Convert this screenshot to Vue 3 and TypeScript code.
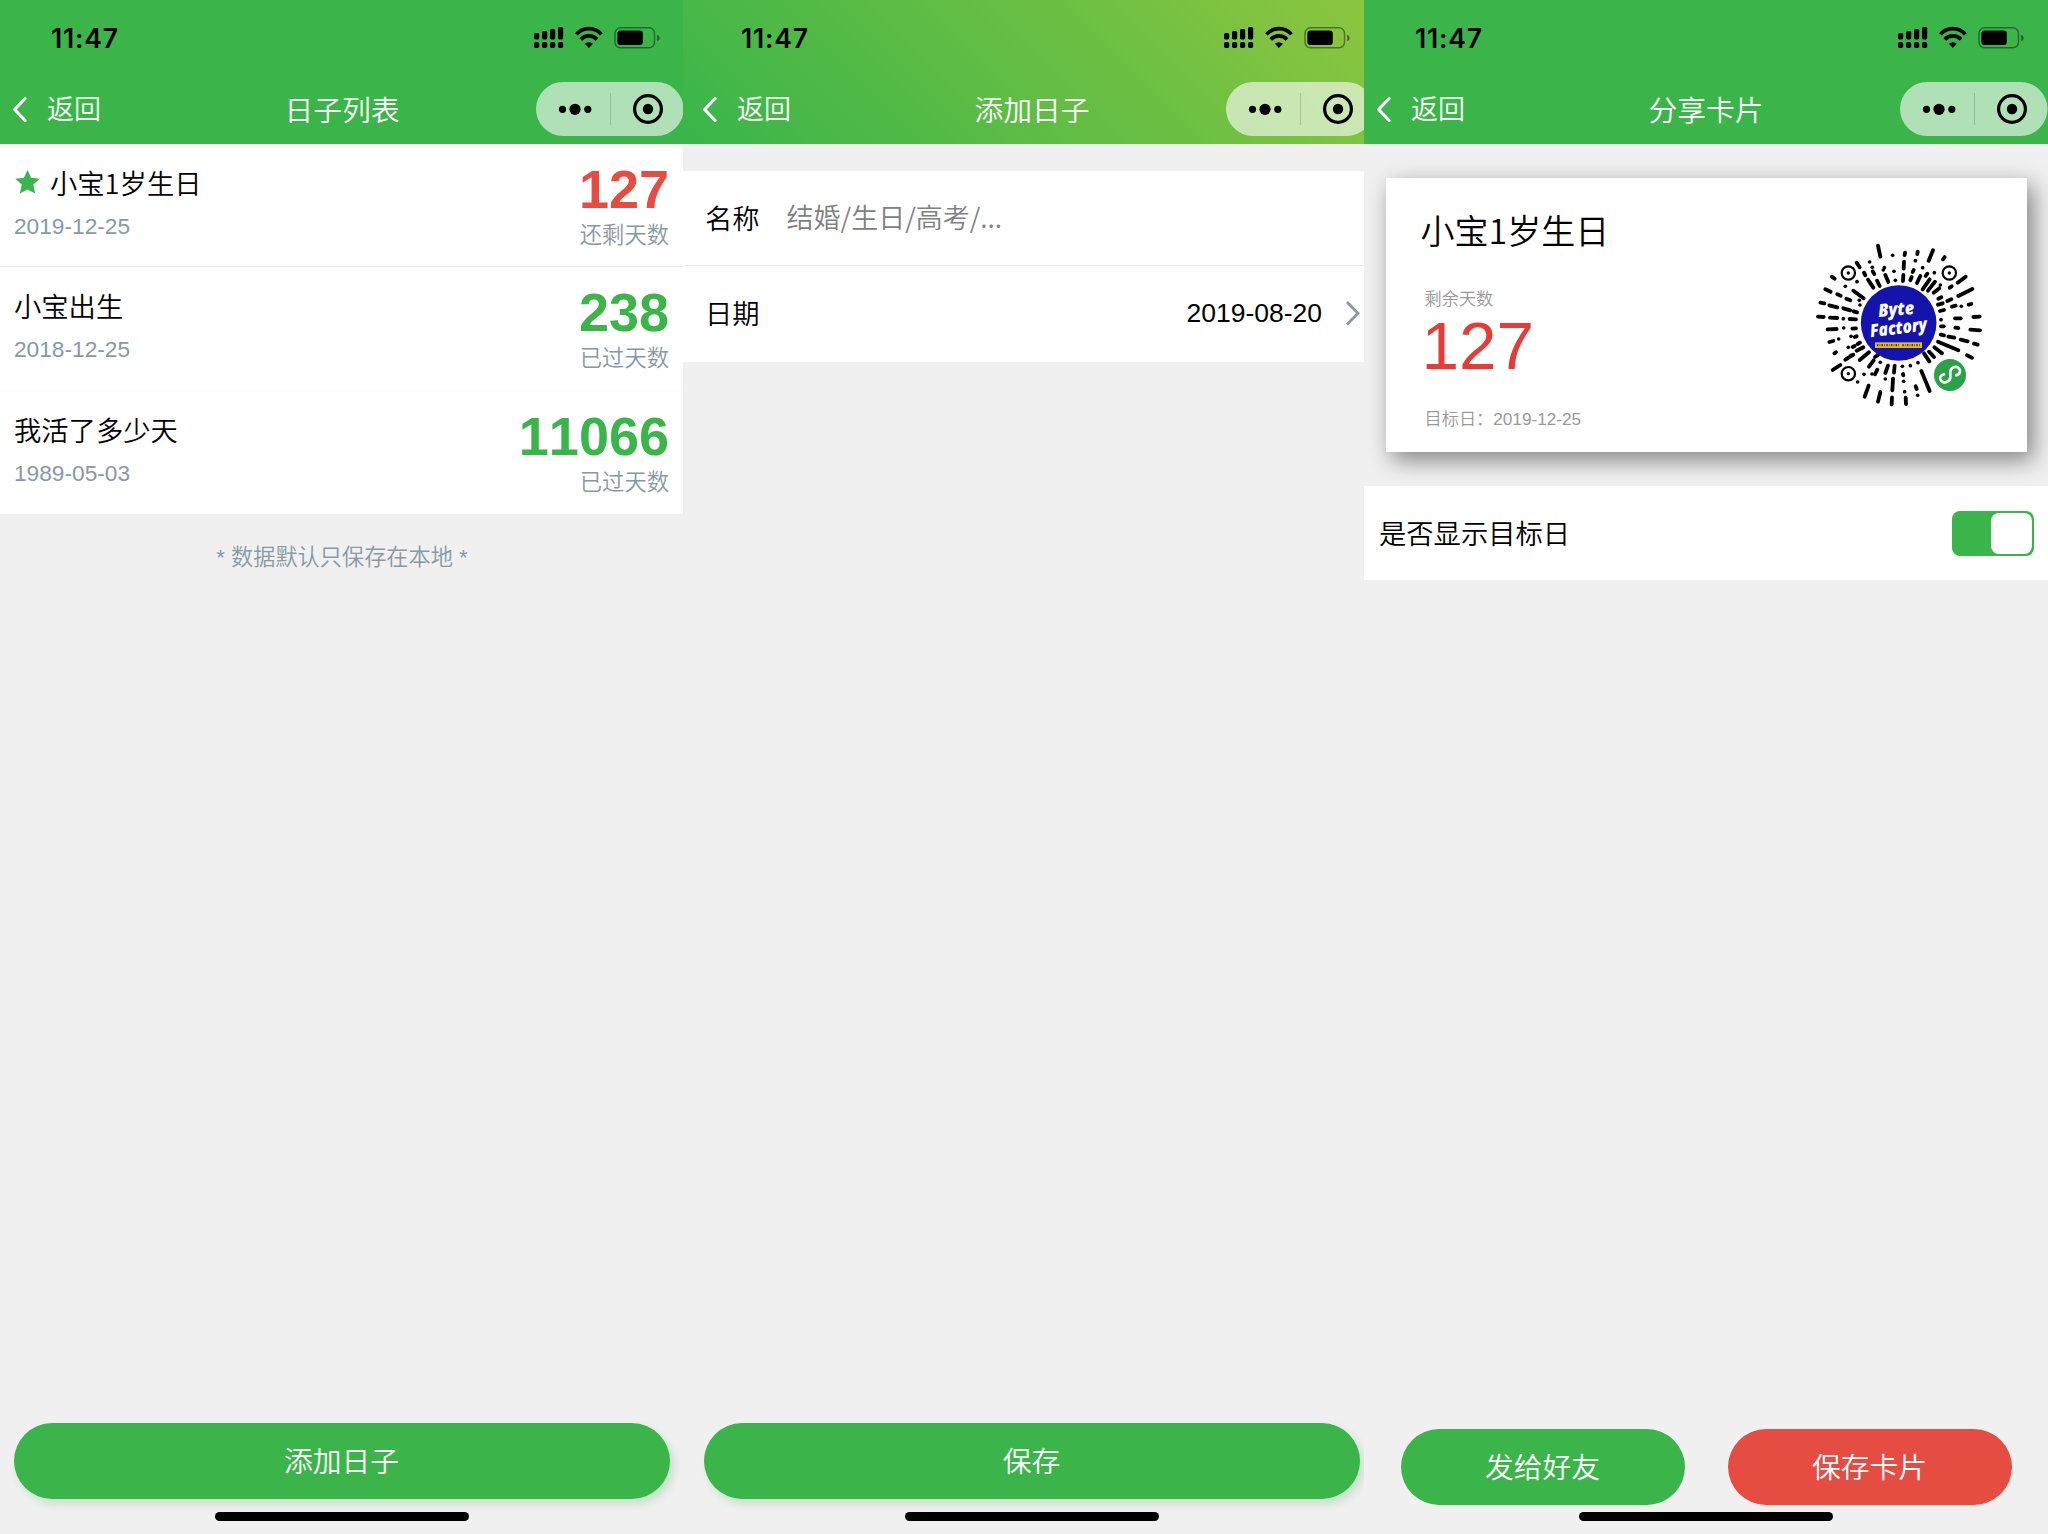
<script setup lang="ts">
import { h, type FunctionalComponent } from 'vue'

interface Day {
  name: string
  date: string
  count: number
  label: string
  starred?: boolean
  upcoming?: boolean
}

const days: Day[] = [
  { name: '小宝1岁生日', date: '2019-12-25', count: 127, label: '还剩天数', starred: true, upcoming: true },
  { name: '小宝出生', date: '2018-12-25', count: 238, label: '已过天数' },
  { name: '我活了多少天', date: '1989-05-03', count: 11066, label: '已过天数' },
]

// Signal, wifi and battery glyphs of the status bar
const StatusIcons: FunctionalComponent = () =>
  h('svg', { width: 128, height: 24, viewBox: '0 0 128 24', style: 'display:block' }, [
    ...[[0, 7], [8, 5], [16, 3], [24, 1]].flatMap(([x, y]) => [
      h('rect', { x, y, width: 5.2, height: 13.4 - y, rx: 1.6 }),
      h('rect', { x, y: 16, width: 5.2, height: 6, rx: 1.8 }),
    ]),
    h('path', { d: 'M42.4 8.4A16.6 16.6 0 0 1 67.4 8.4M46.8 13.4A11 11 0 0 1 63 13.4', fill: 'none', stroke: '#000', 'stroke-width': 3.7 }),
    h('path', { d: 'M54.9 22l-4-4.2a5.8 5.8 0 0 1 8 0z' }),
    h('rect', { x: 81, y: 1.8, width: 39.5, height: 20, rx: 5.5, fill: 'none', stroke: '#000', 'stroke-opacity': 0.42, 'stroke-width': 1.4 }),
    h('rect', { x: 83.4, y: 4.6, width: 25.4, height: 14.4, rx: 3 }),
    h('path', { d: 'M123.2 8.8q2.4 1 2.4 3.2t-2.4 3.2z', 'fill-opacity': 0.5 }),
  ])

const Capsule: FunctionalComponent = () =>
  h('svg', { width: 148, height: 54, viewBox: '0 0 148 54', style: 'display:block' }, [
    h('rect', { width: 147.5, height: 54, rx: 27, fill: '#fff', 'fill-opacity': 0.6 }),
    h('path', { d: 'M74.5 11v32', stroke: '#000', 'stroke-opacity': 0.16 }),
    h('circle', { cx: 26.5, cy: 27.3, r: 3.6 }),
    h('circle', { cx: 39, cy: 27.3, r: 5.6 }),
    h('circle', { cx: 51.8, cy: 27.3, r: 3.6 }),
    h('circle', { cx: 112, cy: 27, r: 13.4, fill: 'none', stroke: '#000', 'stroke-width': 3.2 }),
    h('circle', { cx: 112, cy: 27, r: 5.2 }),
  ])

const screens = [
  { key: 'list', title: '日子列表' },
  { key: 'add', title: '添加日子' },
  { key: 'share', title: '分享卡片' },
]

// Rays of the mini-program code: [x1, y1, x2, y2]
const rays: number[][] = [
  [264, 77, 271, 110], [345, 98, 344, 105], [383, 95, 382, 102], [429, 91, 416, 122], [464, 111, 459, 118],
  [342, 125, 341, 146], [340, 165, 339, 183], [200, 128, 209, 142], [222, 158, 226, 166], [234, 179, 250, 203],
  [248, 154, 253, 162], [261, 182, 269, 198], [286, 165, 295, 186], [371, 150, 368, 156], [365, 171, 361, 181],
  [391, 168, 381, 189], [412, 161, 407, 168], [419, 178, 398, 208], [435, 185, 414, 212],
  [448, 205, 431, 218], [527, 170, 503, 188], [485, 199, 479, 203], [547, 207, 505, 228], [484, 238, 472, 243],
  [445, 236, 454, 232], [458, 250, 444, 254], [497, 257, 486, 260], [544, 252, 536, 254], [462, 270, 450, 273],
  [495, 295, 512, 295], [550, 291, 569, 290], [541, 329, 570, 331], [453, 319, 461, 319], [496, 323, 505, 324],
  [452, 344, 462, 346], [475, 350, 493, 353], [512, 359, 533, 364], [552, 371, 563, 374],
  [444, 365, 505, 391], [531, 406, 546, 413], [433, 382, 456, 400], [417, 395, 432, 411], [402, 400, 418, 424],
  [126, 170, 134, 176], [106, 208, 122, 215], [142, 223, 152, 227], [169, 236, 181, 241], [190, 212, 221, 235],
  [91, 248, 103, 250], [118, 256, 142, 262], [160, 265, 181, 271], [191, 274, 201, 277], [84, 290, 101, 291],
  [120, 293, 142, 294], [179, 297, 198, 298], [113, 328, 140, 327], [187, 326, 198, 325], [118, 366, 130, 363],
  [194, 351, 200, 349], [188, 381, 194, 378], [203, 372, 210, 368], [133, 400, 138, 397], [166, 419, 190, 404],
  [200, 392, 220, 382], [128, 450, 151, 435], [209, 420, 237, 397], [237, 440, 251, 421], [255, 411, 265, 404],
  [236, 497, 224, 530], [271, 516, 264, 545], [262, 449, 255, 463], [294, 437, 286, 459], [314, 437, 312, 458],
  [309, 476, 307, 511], [306, 532, 305, 553], [347, 533, 348, 552], [394, 453, 419, 513], [377, 499, 380, 507],
  [339, 462, 340, 466],
]
const dots: number[][] = [
  [308, 106], [376, 122], [239, 126], [247, 142], [280, 150], [312, 154], [316, 181], [283, 143], [398, 143],
  [433, 158], [166, 199], [201, 185], [210, 255], [208, 241], [514, 259], [453, 299], [160, 296], [161, 324],
  [146, 357], [183, 349], [175, 382], [183, 406], [271, 427], [246, 462], [203, 486], [222, 463], [286, 477],
  [337, 439], [361, 437], [384, 428], [341, 484], [344, 515], [383, 526], [451, 195],
]
</script>

<template>
  <main class="board">
    <section v-for="s in screens" :key="s.key" class="screen" :class="s.key">
      <div class="phone">
        <header class="top">
          <div class="status">
            <span class="clock">11:47</span>
            <StatusIcons />
          </div>
          <div class="nav">
            <div class="back">
              <svg width="18" height="28" viewBox="0 0 18 28"><path d="M14.200 2.500 3.600 13.500l10.600 11" fill="none" stroke="#fff" stroke-width="3" stroke-linecap="round" stroke-linejoin="round" /></svg>
              <span>返回</span>
            </div>
            <h1>{{ s.title }}</h1>
            <Capsule class="capsule" />
          </div>
        </header>

        <template v-if="s.key === 'list'">
          <ul class="days">
            <li v-for="d in days" :key="d.name">
              <div class="info">
                <div class="name">
                  <svg v-if="d.starred" width="26" height="26" viewBox="0 0 26 26"><path d="M13.500 1l3.600 7.700 8.600 1-6.400 5.900 1.800 8.800-7.600-4-7.600 4 1.800-8.800-6.400-5.900 8.600-1z" fill="#39b54a" /></svg>
                  <span>{{ d.name }}</span>
                </div>
                <div class="date">{{ d.date }}</div>
              </div>
              <div class="figure">
                <b :class="{ red: d.upcoming }">{{ d.count }}</b>
                <span>{{ d.label }}</span>
              </div>
            </li>
          </ul>
          <p class="note">* 数据默认只保存在本地 *</p>
          <div class="actions"><button>添加日子</button></div>
        </template>

        <template v-else-if="s.key === 'add'">
          <div class="form">
            <div class="row"><label>名称</label><span class="hint">结婚/生日/高考/...</span></div>
            <div class="row">
              <label>日期</label><span class="value">2019-08-20</span>
              <svg width="18" height="28" viewBox="0 0 18 28"><path d="M3 3l11 11.200L3 25.500" fill="none" stroke="#8799a3" stroke-width="2.800" /></svg>
            </div>
          </div>
          <div class="actions"><button>保存</button></div>
        </template>

        <template v-else>
          <div class="card">
            <div class="card-text">
              <h2>小宝1岁生日</h2>
              <small>剩余天数</small>
              <strong>127</strong>
              <small class="target">目标日：2019-12-25</small>
            </div>
            <svg class="code" width="220" height="210" viewBox="0 0 660 630">
              <g stroke="#000" stroke-width="11.500" stroke-linecap="round">
                <line v-for="(r, i) in rays" :key="i" :x1="r[0]" :y1="r[1]" :x2="r[2]" :y2="r[3]" />
              </g>
              <circle v-for="(p, i) in dots" :key="'d' + i" :cx="p[0]" :cy="p[1]" r="5.500" />
              <g v-for="p in [[175, 159], [478, 159], [175, 461]]" :key="p.join()">
                <circle :cx="p[0]" :cy="p[1]" r="20" fill="#fff" stroke="#000" stroke-width="6.500" />
                <circle :cx="p[0]" :cy="p[1]" r="5" />
              </g>
              <circle cx="326" cy="309" r="113.500" fill="#1414ad" />
              <g fill="#fff" class="logo-text">
                <text transform="translate(266 291) rotate(-5)" font-size="54" textLength="108" lengthAdjust="spacingAndGlyphs">Byte</text>
                <text transform="translate(242 352) rotate(-7)" font-size="54" textLength="172" lengthAdjust="spacingAndGlyphs">Factory</text>
              </g>
              <rect x="255" y="367" width="141" height="17" fill="#e9b92c" />
              <path d="M261 375.500h66M337 375.500h53" stroke="#3a3440" stroke-width="7" stroke-dasharray="4 4 2 4" />
              <circle cx="480" cy="465" r="48" fill="#2aa245" />
              <path d="M462 463c-10 2-13 9-11 15 3 9 14 11 21 7 6-3 9-7 9-14v-14c0-8 5-14 12-16 9-2 17 4 17 12 0 7-4 11-11 13" fill="none" stroke="#fff" stroke-width="8" stroke-linecap="round" />
            </svg>
          </div>
          <div class="row toggle-row"><label>是否显示目标日</label><span class="toggle"><i></i></span></div>
          <div class="actions two"><button>发给好友</button><button class="danger">保存卡片</button></div>
        </template>
        <div class="home"></div>
      </div>
    </section>
  </main>
</template>

<style>
body { margin: 0; background: #f0f0f0; }
</style>

<style scoped>
* { box-sizing: border-box; }
.board {
  display: flex;
  width: 2048px;
  height: 1534px;
  overflow: hidden;
  background: #f0f0f0;
  color: #000;
  font-family: "Liberation Sans", "Noto Sans CJK SC", sans-serif;
  font-weight: 350;
  font-size: 27.3px;
}
.screen { width: 684px; height: 1534px; overflow: hidden; flex: none; }
.screen.list { width: 683px; }
.screen.add { width: 681px; }
.phone { width: 684px; height: 1534px; display: flex; flex-direction: column; }
.add .phone { width: 691px; padding-left: 7px; }
.top { height: 143.500px; background: #3bb54a; flex: none; }
.add .top { margin-left: -7px; padding-left: 7px; background: linear-gradient(45deg, #39b54a, #8dc63f); }
.status { height: 76px; display: flex; justify-content: space-between; padding: 26px 22px 0 51px; }
.clock { font: 600 26.500px/24px Inter, sans-serif; letter-spacing: 0.800px; }
.nav { position: relative; height: 67px; display: flex; align-items: center; justify-content: space-between; color: #fff; }
.back { display: flex; align-items: center; gap: 18px; padding-left: 11px; width: 148px; font-size: 27px; line-height: 40px; }
.nav h1 { margin: 2px 0 0; font-size: 28.800px; font-weight: inherit; line-height: 40px; }
.capsule { margin-top: -1px; }

.days { list-style: none; margin: 0; padding: 0; }
.days li { height: 123.500px; background: #fff; display: flex; justify-content: space-between; padding: 0 15px 0 14px; border-bottom: 1px solid #fafafa; }
.days li:first-child { border-bottom-color: #e9e9e9; }
.days li:last-child { border-bottom-color: #fff; }
.name, .card h2, .hint { font-family: "Noto Sans CJK SC", sans-serif; }
.name { display: flex; align-items: center; gap: 10px; height: 40px; margin-top: 18px; line-height: 40px; }
.date { color: #8799a3; font-size: 22.700px; line-height: 30px; margin-top: 9px; }
.figure { display: flex; flex-direction: column; align-items: flex-end; color: #8799a3; font-size: 22.300px; }
.figure b { font-size: 54px; font-weight: 700; font-kerning: none; line-height: 54px; margin-top: 18px; color: #39b54a; }
.figure b.red { color: #e54d42; }
.figure span { line-height: 30px; margin-top: 5px; }
.note { margin: 29px 0 0; text-align: center; line-height: 30px; font-size: 22.200px; color: #8799a3; }

.form { margin: 27.500px 0 0 -7px; background: #fff; }
.row { height: 95.500px; background: #fff; display: flex; align-items: center; padding: 0 0 3px 21px; }
.form .row { padding-left: 22px; }
.form .row:first-child { border-bottom: 1px solid #eee; height: 95px; }
.hint { margin-left: 27px; color: #808080; font-size: 27px; }
.value { margin-left: auto; margin-right: 22px; padding-top: 2px; font-size: 26.500px; }
.form svg { margin-right: 12px; margin-top: 1px; }

.card { margin: 34.500px 0 0 21.500px; width: 641.500px; height: 274px; background: #fff; box-shadow: 6px 8px 22px rgba(0, 0, 0, 0.46); display: flex; justify-content: space-between; flex: none; }
.card-text { padding: 29px 0 0 35px; display: flex; flex-direction: column; }
.card h2 { font-size: 34px; font-weight: inherit; line-height: 46px; margin: 0; }
.card small { font-size: 17.200px; line-height: 24px; color: #999; margin: 34px 0 0 4px; white-space: nowrap; }
.card strong { font-size: 67.500px; line-height: 67px; font-weight: 400; color: #e53c38; margin: 1px 0 0 1px; }
.card small.target { margin-top: 28px; }
.code { margin: 42px 17px 0 0; }
.logo-text { font-family: "Open Sans", sans-serif; font-weight: 800; font-style: italic; }
.toggle-row { margin-top: 34px; height: 94px; padding: 0 14px 2px 15px; justify-content: space-between; flex: none; }
.toggle { width: 82px; height: 45px; border-radius: 8px; background: #39b54a; padding: 2px; display: flex; justify-content: flex-end; margin-top: 2px; }
.toggle i { width: 41px; height: 41px; border-radius: 8px; background: #fff; }

.actions { margin-top: auto; margin-bottom: 13px; display: flex; padding: 0 0 0 14px; }
button { width: 656px; height: 76px; border: 0; padding: 3px 1px 0 0; border-radius: 38px; background: #3bb54a; color: #fff; font: inherit; font-size: 28.800px; line-height: 73px; box-shadow: 4px 5px 8px rgba(57, 181, 74, 0.24); }
.two { margin-bottom: 7px; padding-left: 37px; gap: 43px; }
.two button { width: 284px; box-shadow: none; }
.two .danger { background: #e54d42; }
.home { width: 254px; height: 9px; border-radius: 5px; background: #000; margin: 0 0 13px 215px; flex: none; }
</style>
